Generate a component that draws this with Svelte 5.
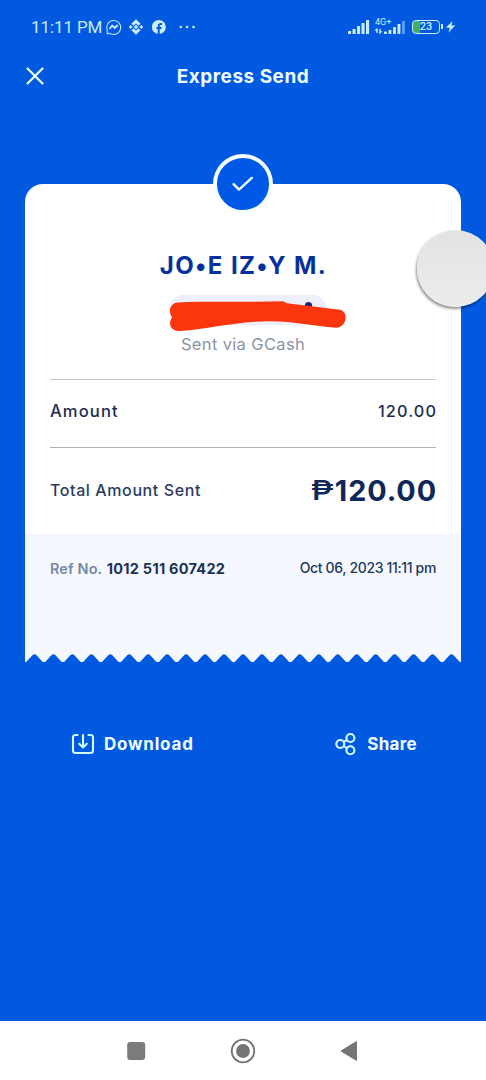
<script lang="ts">
    interface Receipt {
        recipient: string;
        channel: string;
        amount: string;
        total: string;
        refNo: string;
        sentAt: string;
    }

    const receipt: Receipt = {
        recipient: "JO•E IZ•Y M.",
        channel: "Sent via GCash",
        amount: "120.00",
        total: "120.00",
        refNo: "1012 511 607422",
        sentAt: "Oct 06, 2023 11:11 pm",
    };

    const teeth = 23;
    const toothWidth = 436 / teeth;

    // torn bottom edge of the receipt, one notch per tooth
    let edge = "M0 0H436V8";
    for (let i = teeth - 1; i >= 0; i--) {
        const mid = (i + 0.5) * toothWidth;
        const left = i * toothWidth;
        edge += `L${left + toothWidth - 1.2} 8L${mid + 1.8} 0.9Q${mid} -0.5 ${mid - 1.8} 0.9L${left + 1.2} 8H${left}`;
    }
    edge += "V0Z";

    const bars = [3, 5, 8, 11, 14];
</script>

<div class="screen">
    <div class="status">
        <span class="clock">11:11 PM</span>
        <svg class="notifications" width="92" height="18" viewBox="0 0 92 18">
            <path
                d="M2.2 15.6V12A7 7 0 1 1 5 15.4Z"
                fill="none"
                stroke="#b9e4ff"
                stroke-width="1.1"
                stroke-linejoin="round"
            />
            <path
                d="M4.5 11L7.2 7.5L9.7 10L12.8 7"
                fill="none"
                stroke="#c9edff"
                stroke-width="1.8"
            />
            <g fill="#c9edff">
                <path d="M31 1.2L35.6 5.8L33.4 7.8L31 5.4L28.6 7.8L26.4 5.8Z" />
                <path d="M31 16.8L35.6 12.2L33.4 10.2L31 12.6L28.6 10.2L26.4 12.2Z" />
                <path d="M31 6.7L33.3 9L31 11.3L28.7 9Z" />
                <path d="M25.6 7L27.6 9L25.6 11L23.6 9Z" />
                <path d="M36.4 7L38.4 9L36.4 11L34.4 9Z" />
                <circle cx="53.8" cy="9" r="7" />
                <circle cx="75.8" cy="9" r="1.3" />
                <circle cx="82.1" cy="9" r="1.3" />
                <circle cx="88.5" cy="9" r="1.3" />
            </g>
            <path
                d="M53.7 16V8Q53.7 5.6 57 6M51.5 10H56.5"
                fill="none"
                stroke="#0058dc"
                stroke-width="2"
            />
        </svg>
        <svg class="signal" width="22" height="18" viewBox="0 0 22 18">
            {#each bars as h, i (i)}
                <rect
                    x={i * 4.5}
                    y={16 - h}
                    width="3.1"
                    height={h}
                    rx="0.6"
                    fill="#c9edff"
                />
            {/each}
        </svg>
        <div class="network">
            <span>4G+</span>
            <svg width="30" height="14" viewBox="0 0 30 14">
                <path
                    d="M2 12V8M0.4 9.6L2 7.8M5 7.8V11.8L6.6 10.2"
                    fill="none"
                    stroke="#c9edff"
                    stroke-width="1.4"
                />
                {#each [2.5, 4, 7, 10, 13] as h, i (i)}
                    <rect
                        x={9 + i * 4.5}
                        y={13 - h}
                        width="2.9"
                        height={h}
                        rx="0.6"
                        fill={i === 4 ? "#5b9df0" : "#c9edff"}
                    />
                {/each}
            </svg>
        </div>
        <div class="battery"><span>23</span></div>
        <svg class="bolt" width="12" height="14" viewBox="0 0 12 14">
            <path d="M1 7.6L7.6 1L6.4 5.6H10.2L3.4 12.8L4.8 7.9Z" fill="#c9edff" />
        </svg>
    </div>

    <header class="header">
        <button class="close" aria-label="Close">
            <svg width="18" height="18" viewBox="0 0 18 18">
                <path
                    d="M1.5 1.5L16.5 16.5M16.5 1.5L1.5 16.5"
                    stroke="#e8fbff"
                    stroke-width="2.2"
                    stroke-linecap="round"
                />
            </svg>
        </button>
        <h1>Express Send</h1>
    </header>

    <main class="receipt">
        <div class="badge">
            <svg width="22" height="16" viewBox="0 0 22 16">
                <path
                    d="M1.6 8.2L7 13.6L19.8 1.9"
                    fill="none"
                    stroke="#f0fdff"
                    stroke-width="2.4"
                    stroke-linecap="round"
                    stroke-linejoin="round"
                />
            </svg>
        </div>

        <div class="card">
            <h2>{receipt.recipient}</h2>
            <svg class="redacted" width="180" height="38" viewBox="0 0 180 38">
                <rect x="2" y="1" width="156" height="30" rx="13" fill="#edf0fb" />
                <circle cx="140.5" cy="11.5" r="3.6" fill="#1c2380" />
                <path
                    d="M10 8.5C38 7.2 80 8.5 115 7.3L119 9.2L172 15.8C181 18 179 33 168 33.8C145 32 128 27.5 101 27.3C66 27.5 42 35 12 37C2 37 0 29 4 23.5C0 17 2 9 10 8.5Z"
                    fill="#fb350d"
                />
            </svg>
            <p class="channel">{receipt.channel}</p>

            <div class="row amount">
                <span class="label">Amount</span>
                <span class="value">{receipt.amount}</span>
            </div>
            <div class="row total">
                <span>Total Amount Sent</span>
                <strong><span class="peso">₱</span>{receipt.total}</strong>
            </div>
        </div>

        <div class="reference">
            <span class="ref">Ref No. <b>{receipt.refNo}</b></span>
            <span class="date">{receipt.sentAt}</span>
        </div>
        <svg class="edge" width="436" height="9" viewBox="0 0 436 9">
            <path d={edge} fill="#f5f8fe" />
        </svg>
    </main>

    <div class="actions">
        <button class="download">
            <svg width="24" height="22" viewBox="0 0 24 22">
                <path
                    d="M6.5 2H4.5Q2 2 2 4.5V17.5Q2 20 4.5 20H19.5Q22 20 22 17.5V4.5Q22 2 19.5 2H17.5M12 2V14M8.2 10.8L12 14.4L15.8 10.8"
                    fill="none"
                    stroke="#d3fbff"
                    stroke-width="2.1"
                    stroke-linecap="round"
                    stroke-linejoin="round"
                />
            </svg>
            <span>Download</span>
        </button>
        <button class="share">
            <svg width="22" height="24" viewBox="0 0 22 24">
                <g fill="none" stroke="#d3fbff" stroke-width="2.1">
                    <circle cx="5.3" cy="12" r="4" />
                    <circle cx="15.4" cy="6" r="4" />
                    <circle cx="15.4" cy="18.3" r="4" />
                    <path d="M8.8 9.9L12 8M8.8 14L12 16.3" />
                </g>
            </svg>
            <span>Share</span>
        </button>
    </div>

    <nav class="system">
        <svg width="20" height="20" viewBox="0 0 20 20">
            <rect x="1.2" y="1" width="18" height="18" rx="3" fill="#7b7b7b" />
        </svg>
        <svg width="26" height="26" viewBox="0 0 26 26">
            <circle cx="13" cy="13" r="11.3" fill="none" stroke="#757575" stroke-width="1.8" />
            <circle cx="13" cy="13" r="6.9" fill="#757575" />
        </svg>
        <svg width="20" height="22" viewBox="0 0 20 22">
            <path d="M2 11L17.5 1.6V20.4Z" fill="#757575" stroke="#757575" stroke-linejoin="round" />
        </svg>
    </nav>

    <div class="bubble"></div>
</div>

<style>
    :global(body) {
        margin: 0;
    }

    .screen {
        position: relative;
        display: flex;
        flex-direction: column;
        width: 486px;
        height: 1080px;
        overflow: hidden;
        background: #0059df;
        font-family: Inter, "Open Sans", sans-serif;
        color: #1c2b50;
    }

    h1,
    h2,
    p {
        margin: 0;
    }

    button {
        display: flex;
        align-items: center;
        padding: 0;
        border: 0;
        background: none;
        font-family: inherit;
        color: #effdff;
    }

    svg {
        display: block;
        flex: none;
    }

    .status {
        display: flex;
        align-items: center;
        box-sizing: border-box;
        height: 54px;
        padding: 0 30px 0 31px;
        color: #c9edff;
    }

    .clock {
        width: 74px;
        font-family: Roboto, sans-serif;
        font-size: 17px;
        letter-spacing: -0.1px;
        white-space: nowrap;
    }

    .signal {
        margin-left: auto;
    }

    .network {
        display: grid;
        width: 30px;
        margin-left: 5px;
    }

    .network span,
    .network svg {
        grid-area: 1 / 1;
    }

    .network span {
        margin-top: -1px;
        font-family: Roboto, sans-serif;
        font-size: 9px;
        line-height: 9px;
    }

    .network svg {
        margin-top: 2px;
    }

    .battery {
        position: relative;
        box-sizing: border-box;
        width: 28px;
        height: 14px;
        margin-left: 7px;
        border: 1.5px solid #c9edff;
        border-radius: 4px;
        background: linear-gradient(90deg, #45ad5b 7px, transparent 7px);
        font-family: Roboto, sans-serif;
        font-size: 11px;
        font-weight: 500;
        line-height: 12px;
        text-align: center;
    }

    .battery::after {
        content: "";
        position: absolute;
        top: 3px;
        right: -4px;
        width: 2px;
        height: 5px;
        background: #c9edff;
    }

    .bolt {
        margin-left: 5px;
        margin-right: -1px;
    }

    .header {
        display: grid;
        grid-template-columns: 60px 1fr 60px;
        align-items: center;
        height: 44px;
    }

    .close {
        padding-left: 26px;
    }

    h1 {
        padding-top: 2px;
        font-size: 19px;
        font-weight: 700;
        line-height: 24px;
        letter-spacing: 0.5px;
        text-align: center;
        color: #effdff;
    }

    .receipt {
        display: flex;
        flex-direction: column;
        width: 436px;
        margin: 56px auto 0;
    }

    .badge {
        z-index: 1;
        display: flex;
        align-items: center;
        justify-content: center;
        box-sizing: border-box;
        width: 60px;
        height: 60px;
        margin: 0 auto -30px;
        border: 4px solid #f5fdff;
        border-radius: 50%;
        background: #0059e6;
    }

    .card {
        display: flex;
        flex-direction: column;
        box-sizing: border-box;
        height: 349px;
        padding: 67px 25px 0;
        border-radius: 18px 18px 0 0;
        background: #fff;
    }

    h2 {
        margin-right: -1px;
        font-size: 24px;
        font-weight: 700;
        line-height: 30px;
        letter-spacing: 1.4px;
        text-align: center;
        color: #06319d;
    }

    .redacted {
        margin: 13px 0 0 118px;
    }

    .channel {
        font-size: 16.5px;
        line-height: 24px;
        letter-spacing: 0.35px;
        text-align: center;
        color: #8b94a2;
    }

    .row {
        display: flex;
        align-items: center;
        justify-content: space-between;
        border-top: 1px solid #c4c6ca;
        font-size: 16px;
        font-weight: 500;
    }

    .amount {
        height: 67px;
        margin-top: 23px;
    }

    .amount span {
        margin-top: -5px;
        letter-spacing: 1.1px;
    }

    .amount .label {
        font-size: 16.6px;
    }

    .amount .value {
        margin-right: -1px;
        font-size: 16.3px;
    }

    .total {
        height: 86px;
        border-color: #adb0b5;
        letter-spacing: 0.6px;
        color: #2b3c5f;
    }

    .total strong {
        display: flex;
        align-items: center;
        margin: 1px -1px 0 0;
        font-size: 28.8px;
        letter-spacing: 0.9px;
        color: #10275a;
    }

    .peso {
        margin-right: 3px;
        font-size: 27px;
        font-weight: 500;
        letter-spacing: 0;
        transform: scaleX(1.25);
    }

    .reference {
        display: flex;
        justify-content: space-between;
        box-sizing: border-box;
        height: 121px;
        padding: 25px 25px 0;
        background: #f5f8fe;
        font-size: 14.5px;
        line-height: 20px;
        white-space: nowrap;
    }

    .ref {
        padding-top: 1px;
        color: #7788a3;
        font-weight: 600;
        letter-spacing: 0.1px;
    }

    .ref b {
        margin-left: 1px;
        font-weight: 700;
        letter-spacing: 0.25px;
        color: #1c3258;
    }

    .date {
        font-size: 14px;
        font-weight: 500;
        letter-spacing: -0.35px;
        color: #22385b;
    }

    .actions {
        display: flex;
        justify-content: space-between;
        padding: 0 69px 0 71px;
        margin-top: 69px;
    }

    .actions button {
        gap: 9px;
        height: 24px;
        font-size: 17px;
        font-weight: 700;
        letter-spacing: 0.8px;
    }

    .actions .share {
        gap: 10px;
        letter-spacing: 0.3px;
    }

    .system {
        display: flex;
        align-items: center;
        justify-content: space-between;
        box-sizing: border-box;
        height: 59px;
        margin-top: auto;
        padding: 0 127px 0 126px;
        background: #fff;
    }

    .bubble {
        position: absolute;
        top: 230px;
        left: 417px;
        width: 77px;
        height: 77px;
        border-radius: 50%;
        background: linear-gradient(#e3e3e3, #ececec);
        box-shadow: -1px 2px 3px rgba(0, 0, 0, 0.45);
    }
</style>
